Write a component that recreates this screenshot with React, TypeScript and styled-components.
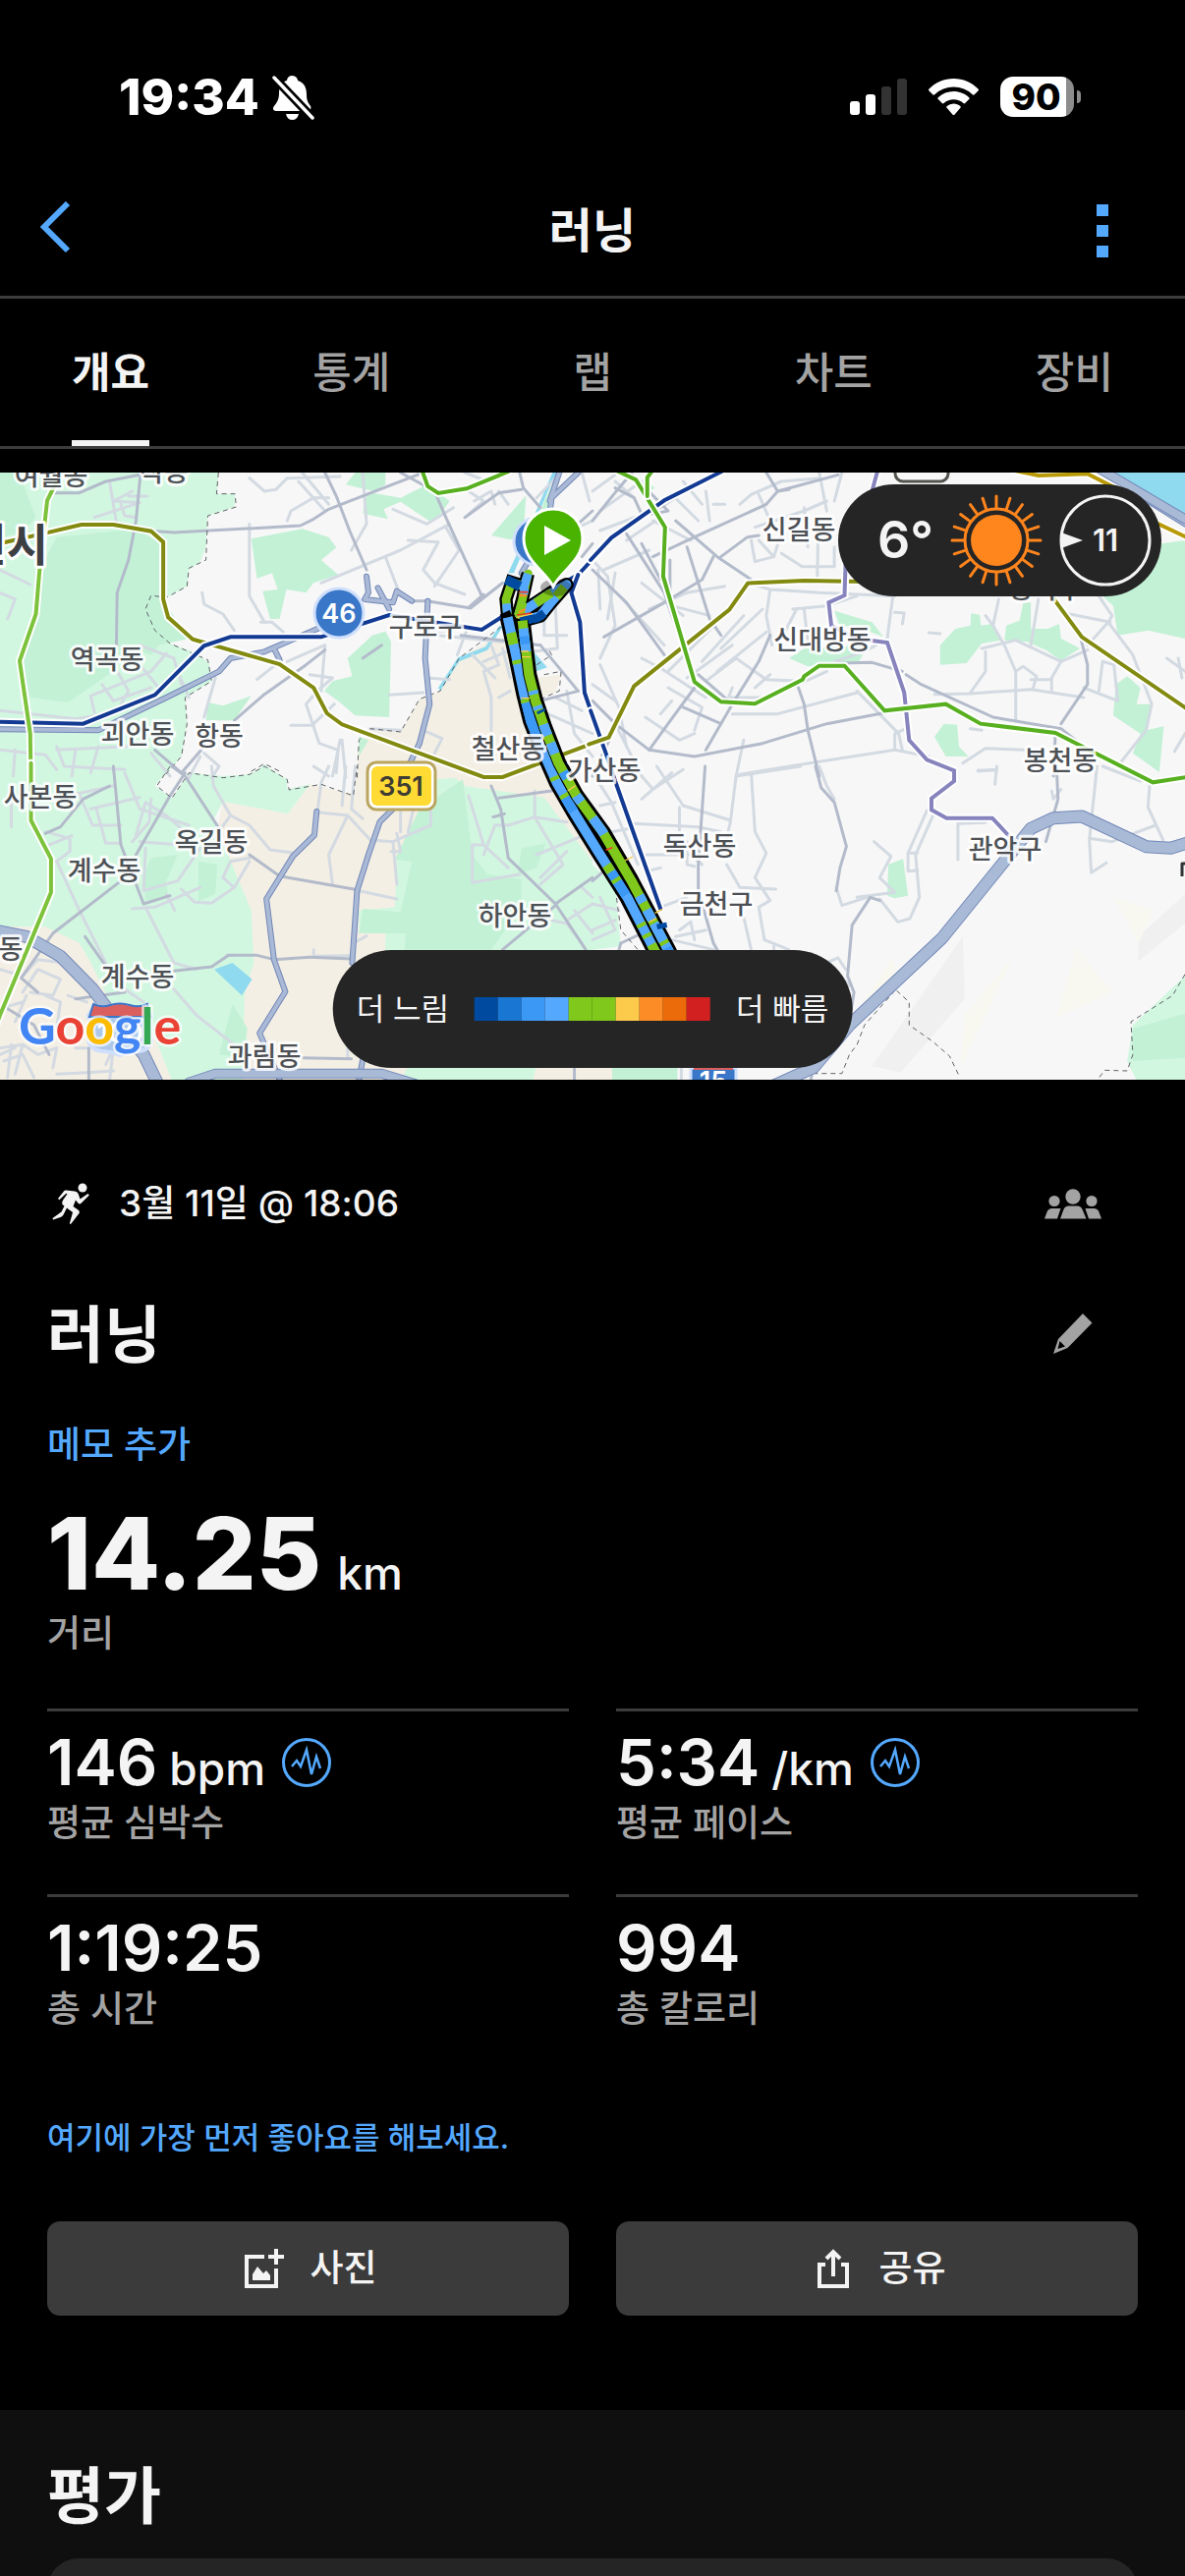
import React from "react";
import styled, { createGlobalStyle } from "styled-components";

const sans = `Inter, "Noto Sans CJK KR", "Noto Sans", sans-serif`;

const color = {
  text: "#f4f4f4",
  muted: "#a3a3a3",
  accent: "#54a9ff",
  line: "#3c3c3c",
  pill: "#252525",
};

const GlobalStyle = createGlobalStyle`
  *, *::before, *::after { box-sizing: border-box; }
  html, body { margin: 0; background: #000; }
  h1, h2, p, dl, dd, dt { margin: 0; font-weight: inherit; }
  button { appearance: none; border: 0; background: none; padding: 0; margin: 0; font: inherit; color: inherit; cursor: pointer; }
  a { color: inherit; text-decoration: none; }
  svg { display: block; flex: none; }
`;

const Screen = styled.div`
  height: 100vh;
  overflow-y: auto;
  scrollbar-width: none;
  display: flex;
  flex-direction: column;
  background: #000;
  color: ${color.text};
  font-family: ${sans};
`;

/* ---------- status bar ---------- */

const StatusBar = styled.div`
  flex: none;
  height: 165px;
  padding: 32px 106px 0 121px;
  display: flex;
  align-items: center;
  justify-content: space-between;
  color: #fff;
`;

const StatusGroup = styled.div<{ $gap: number }>`
  display: flex;
  align-items: center;
  gap: ${(p) => p.$gap}px;
`;

const Clock = styled.span`
  font-size: 51px;
  line-height: 60px;
  font-weight: 800;
`;

const Battery = styled.div`
  display: flex;
  align-items: center;
  gap: 3px;
`;

const BatteryBody = styled.div`
  width: 75px;
  height: 41px;
  border-radius: 13px;
  background: linear-gradient(90deg, #fff 90%, #8c8c8c 90%);
  color: #000;
  font-size: 37px;
  line-height: 41px;
  font-weight: 800;
  text-align: center;
  padding-right: 2px;
`;

const BatteryTip = styled.div`
  width: 4px;
  height: 13px;
  border-radius: 0 4px 4px 0;
  background: #8c8c8c;
`;

/* ---------- header ---------- */

const Header = styled.header`
  flex: none;
  height: 139px;
  padding: 4px 41px 0;
  display: grid;
  grid-template-columns: 1fr auto 1fr;
  align-items: center;
  border-bottom: 3px solid ${color.line};
`;

const HeaderButton = styled.button<{ $end?: boolean }>`
  justify-self: ${(p) => (p.$end ? "end" : "start")};
  padding-right: ${(p) => (p.$end ? 37 : 0)}px;
  padding-bottom: ${(p) => (p.$end ? 0 : 6)}px;
  color: ${color.accent};
`;

const HeaderTitle = styled.h1`
  font-size: 48px;
  line-height: 64px;
  font-weight: 600;
`;

const Tabs = styled.nav`
  flex: none;
  display: grid;
  grid-template-columns: repeat(5, 1fr);
  column-gap: 20px;
  border-bottom: 3px solid ${color.line};
`;

const Tab = styled.a<{ $active?: boolean }>`
  justify-self: center;
  height: 150px;
  padding-top: 6px;
  border-bottom: 6px solid ${(p) => (p.$active ? color.text : "transparent")};
  color: ${(p) => (p.$active ? color.text : color.muted)};
  font-size: 43px;
  line-height: 138px;
  font-weight: ${(p) => (p.$active ? 600 : 500)};
`;

/* ---------- map ---------- */

const MapPanel = styled.section`
  flex: none;
  position: relative;
  height: 618px;
  margin-top: 24px;
  overflow: hidden;
  background: #f7f7f7;
`;

const MapCanvas = styled.svg`
  width: 100%;
  height: 100%;
  font-family: "Noto Sans CJK KR", sans-serif;
`;

const Weather = styled.div`
  position: absolute;
  top: 12px;
  right: 24px;
  height: 114px;
  padding: 0 10px 0 40px;
  border-radius: 57px;
  background: ${color.pill};
  display: flex;
  align-items: center;
  gap: 17px;
`;

const Temperature = styled.span`
  font-size: 52px;
  line-height: 60px;
  font-weight: 600;
`;

const Legend = styled.div`
  position: absolute;
  bottom: 12px;
  left: 50%;
  transform: translateX(-50%);
  height: 120px;
  padding: 0 24px;
  border-radius: 60px;
  background: ${color.pill};
  display: flex;
  align-items: center;
  gap: 26px;
  white-space: nowrap;
  font-size: 31px;
  line-height: 48px;
`;

const Swatches = styled.div`
  display: flex;
`;

const Swatch = styled.span<{ $fill: string }>`
  width: 24px;
  height: 24px;
  background: ${(p) => p.$fill};
`;

/* ---------- summary ---------- */

const Summary = styled.section`
  flex: none;
  padding: 76px 48px 96px;
  display: flex;
  flex-direction: column;
`;

const Row = styled.div<{ $height: number; $end: number }>`
  height: ${(p) => p.$height}px;
  padding-right: ${(p) => p.$end}px;
  display: flex;
  align-items: center;
  justify-content: space-between;
`;

const DateLine = styled.div`
  display: flex;
  align-items: center;
  gap: 26px;
  font-size: 37px;
  line-height: 48px;
  font-weight: 500;
`;

const IconButton = styled.button`
  color: ${color.muted};
`;

const ActivityName = styled.h2`
  font-size: 63px;
  line-height: 84px;
  font-weight: 600;
`;

const MemoLink = styled.a`
  align-self: flex-start;
  color: ${color.accent};
  font-size: 37px;
  line-height: 60px;
  font-weight: 500;
`;

const Distance = styled.div`
  margin-top: 22px;
`;

const Value = styled.p<{ $size: number; $line: number; $weight: number; $gap: number }>`
  display: flex;
  align-items: baseline;
  gap: ${(p) => p.$gap}px;
  font-size: ${(p) => p.$size}px;
  line-height: ${(p) => p.$line}px;
  font-weight: ${(p) => p.$weight};
`;

const Unit = styled.span`
  font-size: 46px;
  line-height: 48px;
  font-weight: 500;
`;

const Caption = styled.p`
  color: ${color.muted};
  font-size: 37px;
  line-height: 48px;
  font-weight: 500;
`;

const TwoColumns = styled.div<{ $top: number }>`
  margin-top: ${(p) => p.$top}px;
  display: grid;
  grid-template-columns: 1fr 1fr;
  gap: 48px;
`;

const Metric = styled.div`
  border-top: 3px solid ${color.line};
  padding-top: 14px;
`;

const MetricLine = styled.div`
  display: flex;
  align-items: center;
  gap: 17px;
`;

const InsightButton = styled.button`
  color: ${color.accent};
`;

const LikePrompt = styled.a`
  align-self: flex-start;
  margin-top: 83px;
  color: ${color.accent};
  font-size: 31px;
  line-height: 48px;
  font-weight: 500;
`;

const ActionButton = styled.button`
  height: 96px;
  padding-left: 6px;
  border-radius: 13px;
  background: #3b3b3b;
  display: flex;
  align-items: center;
  justify-content: center;
  gap: 26px;
  font-size: 37px;
  line-height: 48px;
  font-weight: 500;
`;

/* ---------- evaluation ---------- */

const Evaluation = styled.section`
  flex: 1 0 auto;
  padding: 45px 48px 48px;
  background: #0f0f0f;
`;

const SectionTitle = styled.h2`
  font-size: 63px;
  line-height: 84px;
  font-weight: 600;
`;

const Card = styled.div`
  margin-top: 22px;
  height: 160px;
  border-radius: 32px;
  background: ${color.pill};
`;

/* ---------- map data ---------- */

type Lines = string[];

interface Tile {
  at: string;
  pale: Lines;
  beige: Lines;
  park: Lines;
  water: Lines;
  minor: Lines;
  major: Lines;
  highway: Lines;
  border: Lines;
}

const SCALE = "scale(0.38457 0.33333)";

const tiles: Tile[] = [
  {
    at: `translate(0 -11) ${SCALE}`,
    pale: [
      "0,33 578,33 575,98 622,98 620,138 550,165 545,260 530,305 500,330 495,380 440,415 385,408 385,450 410,515 450,555 520,585 553,615 560,670 490,720 495,800 480,900 430,965 0,965",
      "660,965 700,925 748,965",
    ],
    beige: [
      "980,815 1060,825 1110,725 1165,700 1215,600 1290,550 1350,530 1420,660 1484,650 1470,705 1425,720 1470,965 950,965 945,880",
    ],
    park: [
      "0,33 50,33 95,170 60,215 0,230",
      "150,230 360,205 425,250 430,420 500,540 420,560 400,590 350,570 300,640 180,735 80,720 55,600 95,480 105,330",
      "940,33 1020,33 1020,70 990,90 915,70",
      "960,158 972,92 1060,110 1130,70 1190,120 1160,170 1142,185 1060,122 1015,145 1027,175",
      "665,235 800,205 870,230 890,262 850,300 895,345 830,370 810,400 758,390 740,480 715,480 695,395 735,390 720,340 680,357",
      "1300,225 1392,103 1385,225 1350,238",
      "545,790 550,735 590,745 665,715 620,790",
      "985,530 1020,518 1035,550 1030,780 940,775 900,735 858,700 880,670 932,655 920,600",
      "950,840 975,850 950,900",
      "1400,270 1440,120 1470,50 1440,200",
    ],
    water: [
      "1165,700 1215,610 1290,575 1330,505 1322,500 1285,565 1212,598 1160,690",
      "1412,580 1448,628 1420,640",
      "1360,340 1450,90 1475,33 1462,33 1400,200 1345,340",
    ],
    minor: [
      "0,330 80,375", "0,400 40,420 20,480", "250,170 370,125 300,120 350,90", "290,60 310,200", "320,130 330,165 360,170", "340,105 390,105",
      "660,50 700,90 730,85 760,50 900,45", "790,60 860,150", "800,33 870,130", "760,180 770,150 830,110 870,110",
      "850,370 1060,270 1190,190", "1080,240 1160,245 1120,330 1150,370 1230,405", "660,190 660,410 700,490", "535,400 540,435 590,465 620,515",
      "1020,290 1060,410", "930,270 970,190 960,33", "1150,380 1215,270 1180,200", "1040,145 1130,190 1200,140", "1240,90 1280,120 1240,160",
      "690,490 720,490 750,520", "760,610 860,560 850,700", "680,665 740,610", "820,650 880,660 840,700 810,740 845,860 895,880 890,950",
      "770,805 830,805", "830,930 870,960", "885,740 830,800", "0,760 200,785 280,770", "240,715 400,640 440,585", "240,715 250,765", "310,640 340,700 320,740", "370,560 460,600 480,680",
      "270,680 300,730 400,690", "370,620 420,690", "470,640 500,720", "150,880 330,870 380,860", "150,870 170,930 330,940", "200,880 190,960", "260,870 240,950", "0,880 120,895 150,940", "40,880 35,960",
      "400,890 450,960", "540,890 580,930 560,965", "530,900 500,965", "570,660 540,780", "1130,460 1160,530 1330,550", "1140,520 1230,510", "1240,500 1210,590", "1130,660 1190,665", "1030,712 1120,705",
      "1300,560 1320,620 1280,640 1300,720 1300,820", "1250,590 1310,660", "1330,570 1350,660", "1280,610 1340,580", "1320,720 1350,700", "1120,820 1170,845 1150,890", "980,815 1060,820", "905,850 915,965",
      "1470,440 1475,570 1410,580", "1440,440 1440,530 1500,530", "1500,700 1520,830 1568,900", "1450,770 1568,830", "1470,720 1540,760", "900,850 880,960", "1470,50 1420,110", "1530,200 1568,180",
      "1255,120 1300,90 1310,130", "1320,90 1345,130", "1540,33 1560,120", "1230,33 1290,60",
    ],
    major: [
      "140,95 210,95 280,60 400,33", "415,212 460,216 640,205 795,195 830,175 870,145 970,100 1120,33", "860,33 890,105 925,210 970,330", "372,33 360,180 340,300 310,400 308,560",
      "1060,33 1150,90 1180,170 1275,410", "1090,425 1130,425 1245,447 1330,370", "1280,405 1240,445", "1375,33 1385,80 1430,140", "1380,85 1320,95 1230,170", "1568,150 1520,200 1450,300",
      "620,790 700,710 810,620 860,575", "410,880 480,950", "480,950 540,870", "960,600 1010,560", "1220,530 1430,560", "1430,560 1530,700", "1430,730 1530,700", "1568,250 1540,290",
    ],
    highway: [
      "0,817 260,820 440,720 580,640 610,600 700,580 840,510 900,480", "970,350 975,400 965,420 1040,430 1050,395 1090,425", "1000,385 1030,450", "1132,425 1125,600 1137,740 1110,860 1085,920", "1530,33 1460,110 1450,200 1400,300 1380,340",
      "1480,33 1455,120",
      "725,570 740,605",
    ],
    border: [
      "578,33 573,98 622,98 625,138 550,165 545,300 500,325 495,380 440,415 400,408 385,450 410,515 450,555 550,605 560,670 490,720 495,800 480,900 430,965",
      "945,965 950,850 980,815 1060,825 1110,725 1165,700 1215,600 1325,505",
      "1420,620 1460,590 1450,570", "1440,650 1485,640 1480,700 1420,730", "665,945 700,922 745,948",
    ],
  },
  {
    at: `translate(603 -11) ${SCALE}`,
    pale: [],
    beige: [],
    park: [
      "1340,400 1500,290 1505,250 1568,240 1568,540 1470,515 1390,530 1378,440",
      "640,455 740,490 770,535 690,500 655,505", "520,600 560,570 730,560 705,610 600,622 570,625",
      "920,560 960,510 1000,500 1002,463 1025,468 1028,500 1060,495 1080,545 1030,555 990,615 920,620",
      "1095,500 1130,485 1140,430 1160,430 1160,510 1205,510 1235,495 1240,540 1290,570 1240,607 1200,575 1150,550 1090,545",
      "1385,680 1415,655 1450,690 1440,740 1482,740 1465,820 1512,808 1500,948 1430,890 1450,830 1378,775",
      "905,840 930,800 965,803 970,870 995,900 935,900", "145,60 165,80 150,90",
    ],
    water: ["1375,30 1568,30 1568,182"],
    minor: [
      "0,90 60,40", "20,150 130,60", "60,60 110,110", "20,210 180,140 300,50", "90,240 180,170", "160,180 260,240", "210,100 280,180", "240,60 290,130", "300,90 310,180", "320,130 350,130", "390,130 420,100 500,60 600,50",
      "440,100 470,180", "420,240 430,305 480,290 440,240", "430,200 560,150 620,120", "500,280 555,320 640,320 640,260", "600,33 620,150", "597,230 595,350", "640,120 660,33", "560,140 570,260", "510,180 480,290",
      "0,300 40,350 60,500 20,600", "30,330 150,270", "15,330 20,450", "60,340 40,480", "80,420 190,560", "130,370 240,470", "150,450 250,400 350,380", "210,440 310,470", "410,370 470,390 600,400 800,410", "470,390 460,470 475,560",
      "340,570 450,450", "290,610 400,470", "200,640 330,490", "250,660 370,560", "540,450 500,540", "560,450 570,550", "530,450 620,440 700,410", "300,670 380,600 460,665 550,670", "430,690 470,650",
      "370,770 490,770 700,705", "370,690 360,720 470,720 620,640", "700,700 810,830 820,880", "130,600 180,630 300,720", "200,690 290,750 270,820", "140,780 230,850 270,830", "180,770 210,730", "20,620 70,750 90,870", "60,800 130,960",
      "380,960 400,850", "390,955 550,925 800,880 890,900", "800,880 800,830 830,815", "640,610 720,580 780,540 795,410", "800,460 825,462 820,495", "890,522 920,525", "905,710 1000,708 1160,695 1300,720",
      "1040,470 1060,500 1090,560 1120,640 1120,790", "1160,560 1180,420", "1075,420 1060,500", "1040,580 1040,640 1000,705", "1030,570 1120,545 1240,610 1310,575", "1120,640 1140,625 1175,655 1165,695", "1215,700 1215,660 1240,610",
      "1160,665 1215,665", "1240,460 1370,490", "1340,410 1375,470 1365,490 1430,590 1480,740 1465,820 1400,915", "1365,490 1310,560", "1340,700 1350,610 1380,620 1390,730", "1300,690 1390,730", "1520,600 1568,640", "1540,885 1568,830", "980,920 1040,875 1140,880", "1000,815 1030,820",
      "1020,945 1070,940", "1550,600 1560,660", "330,640 460,520", "0,680 60,730",
    ],
    major: [
      "0,180 70,80 100,40", "60,80 110,110 130,160", "100,33 200,150 160,160", "90,220 190,400 210,470 240,560", "130,250 180,360", "160,290 270,230 460,130 490,90 650,40", "460,33 490,90 520,85", "250,260 310,480 340,530",
      "220,180 330,290 420,360", "340,290 410,230 440,225", "30,535 190,430 290,360 320,290", "0,330 90,430 190,590", "205,300 205,400", "470,530 440,610 370,740 300,880", "545,690 560,740 570,820 600,960", "150,880 200,800 270,690",
      "0,730 60,800 150,880 270,900 450,860 620,800 780,765", "280,650 370,740", "240,750 340,800", "830,650 870,680 1060,780 1240,815 1300,870", "1290,530 1310,620 1310,680 1240,800", "650,615 740,613 820,640", "1225,830 1220,960", "60,810 0,960",
    ],
    highway: ["1350,33 1568,190"],
    border: [],
  },
  {
    at: `translate(0 299) ${SCALE}`,
    pale: [
      "0,0 450,0 410,60 455,97 500,20 590,30 660,25 700,-2 760,40 760,70 820,55 762,145 590,108 567,160 600,260 665,440 672,600 648,690 645,800 662,860 640,960 455,960 400,800 300,740 240,600 210,540 120,490 0,490",
      "1155,40 1205,35 1230,60 1440,95 1568,290 1568,562 1020,562 1020,505 950,510 950,440 1045,430 1050,280 1110,130",
      "1080,915 1420,915 1410,960 1060,960",
    ],
    beige: ["590,108 762,145 820,55 940,85 945,-4 1480,-4 1568,200 1568,960 0,960 0,480 120,480 500,600"],
    park: [
      "1110,130 1225,40 1250,270 1290,330 1380,345 1380,430 1300,560 1070,560 1075,510 950,510 960,435 1060,445 1090,290 1045,285",
      "380,330 400,280 470,270 440,350 445,400 385,410", "525,290 575,300 570,390 525,412", "580,880 615,725 655,800 640,890", "1380,250 1445,235 1420,310 1370,330",
    ],
    water: ["567,620 615,600 667,650 640,700"],
    minor: [
      "30,60 30,185", "120,200 185,220 185,260 150,290", "150,290 210,440 280,600", "130,240 190,212", "210,85 245,180 320,180", "240,130 370,95", "255,130 280,235 320,235", "330,20 370,130 500,180", "360,210 385,110 440,150 490,200", "400,100 395,170 350,230",
      "300,60 200,85", "370,230 480,240", "385,250 380,380 470,350 530,250", "350,435 410,430 530,370", "385,430 460,600 520,620", "480,375 515,415 560,418 620,370 660,290", "590,340 610,290 660,280", "620,370 590,340", "440,390 462,440",
      "460,680 520,760 620,850", "560,0 565,60 610,150 660,180 715,255 780,265", "610,150 585,190", "840,140 920,150 980,225 1040,230 1140,180", "920,150 870,270 880,360", "915,0 905,120", "940,0 930,130 960,160", "870,0 850,50 840,140", "1060,130 1060,200", "1040,230 1050,360",
      "1035,260 1060,260 1050,205", "1100,100 1080,200", "950,380 1050,405", "830,560 830,580 930,578", "935,540 970,518", "620,577 600,577", "1140,100 1140,180",
      "1240,90 1280,240 1345,310", "1250,240 1250,355 1375,330", "1250,240 1280,240", "1345,180 1415,155 1500,170", "1415,75 1415,155 1490,300 1430,360", "1280,270 1310,180 1345,180", "1420,270 1568,200", "1430,340 1500,260", "1500,470 1568,420", "1520,440 1568,510", "1460,470 1500,480 1540,540", "1540,370 1568,400",
      "0,620 60,640 100,590 170,600 210,640", "60,690 100,620 160,650 140,700 80,690", "40,780 70,700", "0,740 60,720", "0,860 60,850 100,880", "10,900 60,880 90,950", "30,850 20,950", "60,850 40,940", "120,700 160,720 150,800", "100,880 150,860 140,920", "150,940 230,935 300,930", "200,860 230,860", "280,910 300,860 290,960", "0,880 40,860",
      "330,680 380,720", "920,890 920,860", "180,700 230,720",
    ],
    major: [
      "120,205 160,185 220,100 290,60", "455,0 490,30 580,190", "490,20 450,90 360,270", "300,0 320,240 380,420 450,395", "320,350 140,510 60,640", "740,335 950,378", "660,270 740,335", "460,625 560,612 605,577 680,577 725,590 820,583", "820,583 930,588", "800,890 930,893",
      "1300,60 1325,130 1345,280 1470,420 1550,560", "1320,97 1460,75", "1470,425 1330,560", "1470,420 1568,340", "1305,155 1335,145", "50,640 100,690", "330,690 200,710", "235,860 235,955", "20,740 90,790 130,880", "225,520 280,610", "1520,920 1520,957",
    ],
    highway: [
      "838,138 832,210 775,275 705,405 725,590 755,688 687,815 740,957", "1040,130 1005,170 975,270 945,380 932,600", "960,895 950,957",
    ],
    border: [
      "450,0 415,60 455,97 500,20 590,35 660,25 700,0 760,40 765,72 850,55 935,90 945,0",
    ],
  },
  {
    at: `translate(603 299) ${SCALE}`,
    pale: ["0,300 60,370 75,550 0,560", "1430,790 1568,640 1568,960 1440,960 1415,900"],
    beige: ["-40,915 52,915 52,960 -40,960"],
    park: ["783,300 822,282 835,395 800,403 780,395", "52,915 225,915 225,960 52,960", "1430,800 1568,755 1568,890 1430,900"],
    water: [],
    minor: [
      "0,20 50,110 120,300", "20,120 60,110", "50,200 100,190", "380,30 365,170 355,220", "380,30 550,0", "240,120 365,165", "110,175 280,185 340,200", "170,0 240,120", "230,125 230,200", "130,30 160,70 240,10", "130,100 210,20", "420,20 430,200 460,265 430,340 470,410 440,430 455,530 520,560",
      "355,300 390,370 485,375", "400,460 420,560", "140,270 260,270 290,300", "145,320 180,310", "250,230 250,300 270,305", "180,430 250,400", "230,500 260,475 270,530", "210,530 320,560", "220,520 300,500", "480,550 480,560",
      "745,230 790,275 760,340 800,385 700,400", "905,140 855,270 865,400 840,465 808,475 760,405", "885,135 835,265 835,320 860,318", "645,370 660,425 740,395", "835,265 860,265", "620,600 650,585 670,620", "640,620 680,670",
      "1335,0 1315,225 1320,325 1360,295", "1315,220 1375,230 1490,180", "1475,50 1470,125 1510,225", "970,175 1040,172", "967,175 967,285", "1065,55 1070,0", "1020,12 1070,12", "1350,0 1450,45", "1215,75 1220,100 1240,70", "600,0 620,60 640,100",
      "235,920 235,957", "0,420 70,440", "0,500 60,470", "20,400 60,500 0,530",
    ],
    major: [
      "298,0 280,300 280,380 320,540 330,560", "590,0 605,65 640,110 672,245 655,310 645,380", "760,410 735,400 687,485 675,640 692,690 685,740", "75,540 150,500 170,480", "70,560 75,540", "585,910 578,957", "0,350 30,320", "1228,0 1232,100 1200,230",
    ],
    highway: [],
    border: [
      "20,310 60,370 75,500 120,560", "800,685 720,790 700,850 680,880 660,938 580,938", "805,685 838,720 838,790 900,840 945,885 968,940",
      "1568,635 1535,700 1425,780 1430,880 1415,930 1355,928 1335,960",
    ],
  },
];

const boldHighways = [
  { at: tiles[1].at, points: "1340,20 1568,175", width: 8 },
  { at: tiles[2].at, points: "-20,500 70,520 160,580 245,680 310,780 380,880 420,975", width: 11 },
  { at: tiles[2].at, points: "500,965 570,938 1010,938 1100,970", width: 8 },
  { at: tiles[3].at, points: "480,975 585,920 680,790 925,525 1160,190 1220,158 1295,153 1465,245 1530,250 1600,225", width: 11 },
];

const transit = [
  { at: tiles[0].at, stroke: "#828a10", points: "-10,252 120,218 215,192 300,192 400,212 432,245 432,420 445,475 510,542 740,618 830,690 865,768 905,802 1280,963 1330,963 1568,860" },
  { at: tiles[0].at, stroke: "#133a93", points: "-10,794 220,800 410,712 540,562 610,535 850,535 1030,468 1275,513 1340,465 1530,345 1590,270" },
  { at: tiles[0].at, stroke: "#7cc23a", points: "150,60 125,118 118,190 104,340 95,465 52,608 80,830 82,975" },
  { at: tiles[0].at, stroke: "#58b020", points: "1115,20 1132,75 1160,96 1235,82 1345,30" },
  { at: tiles[0].at, stroke: "#133a93", points: "1530,345 1512,400 1535,490 1547,705 1575,800" },
  { at: tiles[1].at, stroke: "#133a93", points: "-5,300 50,232 190,118 345,28" },
  { at: tiles[1].at, stroke: "#133a93", points: "-5,760 40,905 60,975 180,1365" },
  { at: tiles[1].at, stroke: "#828a10", points: "-10,863 43,842 110,685 362,452 411,371 560,363 720,366" },
  { at: tiles[1].at, stroke: "#828a10", points: "1215,410 1295,535 1580,760" },
  { at: tiles[1].at, stroke: "#b79a05", points: "1110,25 1180,42 1310,37 1400,90 1480,180 1580,235" },
  { at: tiles[1].at, stroke: "#8784bd", points: "755,25 735,110 670,300 667,408 625,430 632,500 700,540 780,552 825,705 838,850 885,910 957,943 957,975 897,1028 897,1063 937,1088 1058,1088 1100,1140" },
  { at: tiles[1].at, stroke: "#58b020", points: "60,25 115,55 192,200 187,350 270,672 340,733 430,739 556,665 560,655 600,623 667,623 773,760 935,740 1027,800 1225,828 1483,979 1590,960" },
  { at: tiles[1].at, stroke: "#58b020", points: "160,25 145,48 145,105" },
  { at: tiles[2].at, stroke: "#7cc23a", points: "82,-10 82,165 135,282 135,385 0,760 -10,790" },
];

const places: [string, number, number][] = [
  ["여월동", 52, 13], ["작동", 167, 9], ["역곡동", 109, 200], ["괴안동", 140, 276], ["항동", 223, 278], ["구로구", 433, 167],
  ["철산동", 517, 291], ["가산동", 615, 313], ["신길동", 813, 68], ["신대방동", 837, 180], ["동작구", 1064, 128], ["봉천동", 1079, 303],
  ["사본동", 41, 340], ["옥길동", 215, 386], ["계수동", 106, 415], ["동", 11, 495], ["계수동", 140, 523], ["과림동", 269, 604],
  ["하안동", 524, 461], ["독산동", 712, 390], ["금천구", 729, 449], ["관악구", 1023, 393],
];

const outbound = "350,385 375,500 400,620 420,700 447,770 500,890 555,985 626,1100 715,1240 798,1401 840,1480";
const inbound = "395,395 404,470 415,560 435,640 462,720 505,830 560,930 640,1040 728,1190 840,1401 880,1480";
const loopWest = "350,385 345,330 362,278 400,290 412,252 395,330 382,380";
const loopEast = "395,340 385,375 480,312 530,285 478,345 450,380 395,395";

function Tilework() {
  return (
    <g fill="none" strokeLinejoin="round" strokeLinecap="round">
      {tiles.map((t) => (
        <g key={t.at} transform={t.at}>
          {t.beige.map((p) => <polygon key={p} points={p} fill="#f4efe4" />)}
          {t.pale.map((p) => <polygon key={p} points={p} fill="#d2f7e0" />)}
          {t.park.map((p) => <polygon key={p} points={p} fill="#c3f1d6" />)}
          {t.water.map((p) => <polygon key={p} points={p} fill="#8fdaee" />)}
        </g>
      ))}
      <g transform={tiles[3].at}>
        <polygon points="740,915 980,520 985,710 815,935" fill="#f0f0f0" />
        <polygon points="1445,520 1568,390 1568,480 1445,595" fill="#f0f0f0" />
        <polygon points="685,770 795,585 805,650 720,760 640,880" fill="#f8f8f1" />
        <polygon points="1230,765 1280,555 1375,690" fill="#f8f8f1" />
        <polygon points="975,920 985,760 1110,585" fill="#f8f8f1" />
        <polygon points="1380,400 1485,440 1445,540" fill="#f8f8f1" />
      </g>
      {tiles.map((t) => (
        <g key={t.at} transform={t.at}>
          {t.minor.map((p) => <polyline key={p} points={p} stroke="#d3dae2" strokeWidth="3" vectorEffect="non-scaling-stroke" />)}
          {t.major.map((p) => <polyline key={p} points={p} stroke="#b3bbcb" strokeWidth="3" vectorEffect="non-scaling-stroke" />)}
          {t.border.map((p) => <polyline key={p} points={p} stroke="#5f6368" strokeWidth="1" strokeDasharray="5 4" strokeLinecap="butt" vectorEffect="non-scaling-stroke" />)}
          {t.highway.map((p) => <polyline key={p} points={p} stroke="#7388b8" strokeWidth="6" vectorEffect="non-scaling-stroke" />)}
          {t.highway.map((p) => <polyline key={p + "f"} points={p} stroke="#a9b9d6" strokeWidth="4" vectorEffect="non-scaling-stroke" />)}
        </g>
      ))}
      {boldHighways.map((h) => (
        <g key={h.points} transform={h.at}>
          <polyline points={h.points} stroke="#7388b8" strokeWidth={h.width + 2} vectorEffect="non-scaling-stroke" />
          <polyline points={h.points} stroke="#a9bad6" strokeWidth={h.width} vectorEffect="non-scaling-stroke" />
        </g>
      ))}
      {transit.map((l) => (
        <g key={l.points} transform={l.at} strokeLinejoin="miter">
          <polyline points={l.points} stroke="#fff" strokeWidth="8" vectorEffect="non-scaling-stroke" />
          <polyline points={l.points} stroke={l.stroke} strokeWidth="4" vectorEffect="non-scaling-stroke" />
        </g>
      ))}
    </g>
  );
}

function Route() {
  return (
    <g transform="translate(400 19) scale(0.33333)" fill="none" strokeLinejoin="round">
      <g stroke="#000">
        <polyline points={outbound} strokeWidth="48" />
        <polyline points={inbound} strokeWidth="48" />
        <polyline points={loopWest} strokeWidth="40" strokeLinecap="square" strokeLinejoin="miter" />
        <polyline points={loopEast} strokeWidth="42" />
      </g>
      <polyline points={loopWest} stroke="#80c91c" strokeWidth="26" />
      <polyline points={loopWest} stroke="#54a9ff" strokeWidth="26" pathLength="100" strokeDasharray="0 4 9 5 0 25 16 14 6 40" />
      <polyline points={loopEast} stroke="#54a9ff" strokeWidth="28" />
      <polyline points={loopEast} stroke="#80c91c" strokeWidth="28" pathLength="100" strokeDasharray="14 11 15 16 10 40" />
      <path d="M345 270 388 290" stroke="#004ba0" strokeWidth="30" />
      <path d="M388 396 440 388 462 372" stroke="#004ba0" strokeWidth="26" />
      <path d="M330 386 360 372" stroke="#000" strokeWidth="20" />
      <polyline points={outbound} stroke="#54a9ff" strokeWidth="30" />
      <polyline points={outbound} stroke="#3c98f5" strokeWidth="30" pathLength="100" strokeDasharray="0 22 9 17 4 18 7 30" />
      <polyline points={outbound} stroke="#80c91c" strokeWidth="30" pathLength="100" strokeDasharray="0 4 3 4 1 9 1 20 1 4 1 20 2 2 1 12 1 2 1 2 12" />
      <polyline points={inbound} stroke="#000" strokeWidth="36" />
      <polyline points={inbound} stroke="#80c91c" strokeWidth="30" />
      <polyline points={inbound} stroke="#54a9ff" strokeWidth="30" pathLength="100" strokeDasharray="0 2 6 10 1 3 1 4 3 2 3 12 2 5 5 3 0 15 2 2 3 1 5 1 12" />
      <polyline points={inbound} stroke="#3c98f5" strokeWidth="30" pathLength="100" strokeDasharray="0 4 2 34 2 50 5 5" />
      <g stroke="#fccb4b" strokeWidth="4">
        <path d="M392 489h22M394 506h26M391 632h26M376 386l50-12M533 915l24-16M708 1128l24-12M800 1288l22-12M782 1316l22-12" />
      </g>
      <path d="M385 308h26M378 378l44-6M650 1096l20-8" stroke="#ef3b24" strokeWidth="5" />
      <path d="M386 318h22M384 370l20-10" stroke="#fb8c26" strokeWidth="7" />
      <path d="M440 678l24-12" stroke="#004ba0" strokeWidth="8" />
      <path d="M806 1330l30-6" stroke="#004ba0" strokeWidth="16" />
    </g>
  );
}

function ActivityMap() {
  return (
    <MapCanvas viewBox="0 0 1206 618" preserveAspectRatio="xMidYMid slice" role="img" aria-label="러닝 경로 지도">
      <rect width="1206" height="618" fill="#f7f7f7" />
      <Tilework />
      <rect x="911" y="-20" width="54" height="29" rx="8" fill="#f7f7f7" stroke="#55534f" strokeWidth="3" />
      <circle cx="547" cy="70" r="24" fill="#3a77c8" stroke="#cfdffc" strokeWidth="3" />
      <Route />
      <g fill="#4d5156" stroke="#fff" strokeWidth="6" strokeLinejoin="round" paintOrder="stroke" fontSize="27" fontWeight="500" textAnchor="middle">
        {places.map(([name, x, y]) => (
          <text key={name + y} x={x} y={y} strokeOpacity="0.85">{name}</text>
        ))}
        <text x="49" y="90" fontSize="46" fontWeight="700" fill="#3c4043" textAnchor="end">부천시</text>
        <path d="M1206 398h-3v13" fill="none" stroke="#303336" strokeWidth="3" />
      </g>
      <circle cx="345" cy="143" r="25" fill="#3a77c8" stroke="#cfdffc" strokeWidth="3" />
      <g fontFamily="Inter, sans-serif" fontWeight="600" fontSize="27" textAnchor="middle">
        <text x="345" y="153" fill="#fff">46</text>
        <rect x="374" y="295" width="69" height="48" rx="9" fill="#fff" stroke="#b9a55f" strokeWidth="3" />
        <rect x="378" y="299" width="61" height="40" rx="6" fill="#ffdb33" />
        <text x="408" y="329" fill="#3f3d33">351</text>
        <path d="M703 606h46v22h-46z" fill="#3a77c8" stroke="#cfdffc" strokeWidth="3" />
        <path d="M706 605h40v3h-40z" fill="#d9605f" />
        <text x="726" y="629" fill="#fff">15</text>
        <path d="M96 542q9 4 16 1 10-4 20 0 9 4 17-1l5 11q-3 13 0 26-3 10-14 10-12 1-18 4-6-3-18-4-11-1-14-10 4-13 0-26z" fill="#adc8ea" stroke="#cfdffc" strokeWidth="4" />
        <path d="M95 541q9 4 17 1 10-3 20 0 10 3 18-1l3 13H91z" fill="#d9605f" stroke="#3a77c8" strokeWidth="2" />
        <text x="122" y="580" fill="#fff">100</text>
      </g>
      <g fontFamily="Lato, sans-serif" fontSize="52" fontWeight="700" stroke="#fff" strokeOpacity="0.7" strokeWidth="5" strokeLinejoin="round" paintOrder="stroke">
        <text x="19" y="582">
          <tspan fill="#4285f4">G</tspan>
          <tspan fill="#ea4335">o</tspan>
          <tspan fill="#fbbc04">o</tspan>
          <tspan fill="#4285f4">g</tspan>
          <tspan fill="#34a853">l</tspan>
          <tspan fill="#ea4335">e</tspan>
        </text>
      </g>
      <ellipse cx="566" cy="117" rx="16" ry="9" fill="#000" opacity="0.3" />
      <path d="M563 116c-8-16-30-26-30-49a30 30 0 0 1 60 0c0 23-22 33-30 49z" fill="#49b300" stroke="#fff" strokeWidth="3" />
      <path d="M554 54v30l27-15z" fill="#fff" />
    </MapCanvas>
  );
}

/* ---------- icons ---------- */

const BellOff = () => (
  <svg width="44" height="46" viewBox="0 0 44 46" fill="#fff" aria-label="무음">
    <path d="M21 1c4 0 6 3 6 5 7 2 9 8 9 14 0 7 2 9 4 12 1 2 0 5-3 5H5c-3 0-4-3-2-5 3-4 5-7 5-13 0-7 3-12 8-13 0-2 2-5 5-5zM15 40h13c-1 4-3 6-6.500 6S16 44 15 40z" />
    <path d="M4 4 41 43" stroke="#000" strokeWidth="9" />
    <path d="M3 3 42 44" stroke="#fff" strokeWidth="3.500" strokeLinecap="round" />
  </svg>
);

const Signal = () => (
  <svg width="58" height="38" viewBox="0 0 58 38" aria-label="신호">
    <rect x="0" y="23" width="10" height="14" rx="3" fill="#fff" />
    <rect x="16" y="16" width="10" height="21" rx="3" fill="#fff" />
    <rect x="32" y="8" width="10" height="29" rx="3" fill="#333" />
    <rect x="48" y="0" width="10" height="37" rx="3" fill="#333" />
  </svg>
);

const Wifi = () => (
  <svg width="51" height="38" viewBox="0 0 51 38" fill="#fff" aria-label="Wi-Fi">
    <path d="M25.500 0C35 0 44 4 50.500 10.500c.6.6.6 1.300 0 1.900l-3.800 3.800c-.6.6-1.300.6-1.900 0A28 28 0 0 0 25.500 8.500 28 28 0 0 0 6.200 16.200c-.6.6-1.300.6-1.900 0L.5 12.400c-.6-.6-.6-1.300 0-1.900C7 4 16 0 25.500 0z" />
    <path d="M25.500 13c6 0 11.500 2.300 15.700 6.200.6.600.6 1.300 0 1.900l-4 4c-.5.500-1.200.5-1.800 0a15 15 0 0 0-19.800 0c-.6.500-1.300.5-1.800 0l-4-4c-.6-.6-.6-1.300 0-1.900A23 23 0 0 1 25.500 13z" />
    <path d="M25.500 25.500c2.600 0 5 .9 6.800 2.500.6.500.6 1.300.1 1.800l-6 7c-.5.600-1.300.6-1.800 0l-6-7c-.5-.5-.5-1.300.1-1.800a10.500 10.500 0 0 1 6.800-2.500z" />
  </svg>
);

const Back = () => (
  <svg width="32" height="54" viewBox="0 0 32 54" fill="none" stroke="currentColor" strokeWidth="6">
    <path d="M28 2 4 26 28 50" />
  </svg>
);

const Kebab = () => (
  <svg width="12" height="54" viewBox="0 0 12 54" fill="currentColor">
    <path d="M0 0h12v12H0zM0 21h12v12H0zM0 42h12v12H0z" />
  </svg>
);

const Sun = () => (
  <svg width="94" height="94" viewBox="-47 -47 94 94" aria-label="맑음">
    <circle r="26" fill="#ff851d" />
    <g stroke="#ff851d" strokeWidth="3" fill="none" strokeLinecap="round">
      <circle r="32" />
      {Array.from({ length: 20 }, (_, i) => (
        <path key={i} d="M0-33V-45" transform={`rotate(${i * 18})`} />
      ))}
    </g>
  </svg>
);

const Wind = () => (
  <svg width="94" height="94" viewBox="-47 -47 94 94" aria-label="풍속 11">
    <circle r="45" fill="none" stroke="#f4f4f4" strokeWidth="3" />
    <path d="M-45-8-23 0-45 8z" fill="#f4f4f4" />
    <text y="11" fill="#f4f4f4" fontFamily="Inter, sans-serif" fontSize="31" fontWeight="600" textAnchor="middle">11</text>
  </svg>
);

const Runner = () => (
  <svg width="47" height="46" viewBox="0 0 47 46" fill="currentColor">
    <circle cx="36" cy="7" r="4.500" />
    <path d="M19 9.500 28 10.500c2 .3 3.500 1.500 4 3.500l1.500 4.500 8-5.500 1.300 1.500-8.500 8.500c-.8.700-2 .6-2.700-.3L29 19.500 26.500 26l5 3.500c1.200 1 1.600 2 1.200 3.300L24 44l-1.200-.6L26 32l-6-4.500-3.500 7C15.500 36 14 37 12 37.500L6 39.500 5.500 38l9-6.500 3-6-2-1.500c-.7-2 0-3.500.8-4.800l4.200-6-1.200-.4-7 6.500-1.300-1.200 6-7.600c.6-.8 1.300-1.100 2-1z" />
  </svg>
);

const People = () => (
  <svg width="58" height="31" viewBox="0 0 58 31" fill="currentColor">
    <circle cx="29" cy="8" r="7.700" />
    <circle cx="10" cy="12.500" r="5.600" />
    <circle cx="48" cy="12.500" r="5.600" />
    <path d="M16 30.500 19.500 21q1.500-3.500 5-3.500h9q3.500 0 5 3.500L42.500 30.500z" />
    <path d="M0 30.500 3 22.500Q4.500 20 7 20h9.500L13 30.500zM58 30.500 55 22.500Q53.500 20 51 20h-9.500L45 30.500z" />
  </svg>
);

const Pencil = () => (
  <svg width="40" height="42" viewBox="0 0 40 42" fill="currentColor">
    <path fillRule="evenodd" d="M30 0 39.500 9.500 14.500 35 0 41 5 26zM6.500 28 4.500 36 12 33.500z" />
  </svg>
);

const Pulse = () => (
  <svg width="50" height="50" viewBox="0 0 50 50" fill="none" stroke="currentColor" strokeWidth="3">
    <circle cx="25" cy="25" r="23.500" />
    <path d="M10 29 15 23l4 6L25 12l5 25 5-18 4 12" strokeWidth="2.500" />
  </svg>
);

const AddPhoto = () => (
  <svg width="40" height="40" viewBox="0 0 40 40">
    <path d="M20 8H2v30h30V20" fill="none" stroke="currentColor" strokeWidth="4" />
    <path d="M32 0v16M24 8h16" stroke="currentColor" strokeWidth="4" />
    <path d="M8 32V26l5-8 6 7 3-3 4 5v5z" fill="currentColor" />
  </svg>
);

const Share = () => (
  <svg width="40" height="40" viewBox="0 0 40 40" fill="none" stroke="currentColor" strokeWidth="4">
    <path d="M12 16H6v22h28V16h-6M20 28V4" />
    <path d="M13 10 20 3l7 7" />
  </svg>
);

/* ---------- page ---------- */

const tabs = ["개요", "통계", "랩", "차트", "장비"];

const pace = ["#004ba0", "#1976d2", "#3c98f5", "#54a9ff", "#80c91c", "#80c91c", "#fccb4b", "#fb8c26", "#eb6a0a", "#d22020"];

const metrics = [
  { value: "146", unit: "bpm", label: "평균 심박수", insight: true },
  { value: "5:34", unit: "/km", label: "평균 페이스", insight: true },
  { value: "1:19:25", label: "총 시간" },
  { value: "994", label: "총 칼로리" },
];

export default function App() {
  return (
    <Screen lang="ko">
      <GlobalStyle />
      <StatusBar>
        <StatusGroup $gap={12}>
          <Clock>19:34</Clock>
          <BellOff />
        </StatusGroup>
        <StatusGroup $gap={22}>
          <Signal />
          <Wifi />
          <Battery>
            <BatteryBody>90</BatteryBody>
            <BatteryTip />
          </Battery>
        </StatusGroup>
      </StatusBar>

      <Header>
        <HeaderButton aria-label="뒤로"><Back /></HeaderButton>
        <HeaderTitle>러닝</HeaderTitle>
        <HeaderButton $end aria-label="더 보기"><Kebab /></HeaderButton>
      </Header>

      <Tabs>
        {tabs.map((name, i) => (
          <Tab key={name} href={`#tab-${i}`} $active={i === 0}>{name}</Tab>
        ))}
      </Tabs>

      <MapPanel>
        <ActivityMap />
        <Weather>
          <Temperature>6°</Temperature>
          <Sun />
          <Wind />
        </Weather>
        <Legend>
          <span>더 느림</span>
          <Swatches>
            {pace.map((fill, i) => <Swatch key={i} $fill={fill} />)}
          </Swatches>
          <span>더 빠름</span>
        </Legend>
      </MapPanel>

      <Summary>
        <Row $height={100} $end={37}>
          <DateLine><Runner />3월 11일 @ 18:06</DateLine>
          <IconButton aria-label="공개 범위"><People /></IconButton>
        </Row>
        <Row $height={166} $end={46}>
          <ActivityName>러닝</ActivityName>
          <IconButton aria-label="이름 편집"><Pencil /></IconButton>
        </Row>
        <MemoLink href="#memo">메모 추가</MemoLink>
        <Distance>
          <Value $size={102} $line={116} $weight={800} $gap={16}>14.25<Unit>km</Unit></Value>
          <Caption>거리</Caption>
        </Distance>
        <TwoColumns $top={52}>
          {metrics.map((m) => (
            <Metric key={m.label}>
              <MetricLine>
                <Value $size={65} $line={76} $weight={600} $gap={12}>
                  {m.value}
                  {m.unit && <Unit>{m.unit}</Unit>}
                </Value>
                {m.insight && <InsightButton aria-label={`${m.label} 분석`}><Pulse /></InsightButton>}
              </MetricLine>
              <Caption>{m.label}</Caption>
            </Metric>
          ))}
        </TwoColumns>
        <LikePrompt href="#like">여기에 가장 먼저 좋아요를 해보세요.</LikePrompt>
        <TwoColumns $top={61}>
          <ActionButton><AddPhoto />사진</ActionButton>
          <ActionButton><Share />공유</ActionButton>
        </TwoColumns>
      </Summary>

      <Evaluation>
        <SectionTitle>평가</SectionTitle>
        <Card />
      </Evaluation>
    </Screen>
  );
}
